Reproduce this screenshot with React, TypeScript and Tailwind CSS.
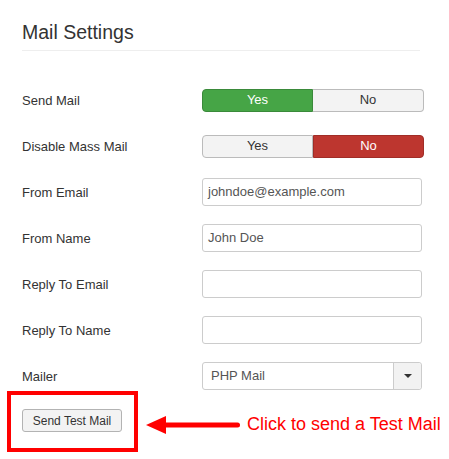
import React from "react";

function Toggle({ active }: { active: "yes" | "no" }) {
  return (
    <div className="flex h-[23px] w-[222px] text-[13px]">
      <div
        className={
          active === "yes"
            ? "flex w-[111px] items-center justify-center rounded-l-[4px] border border-[#3a8a3a] bg-[#46a546] text-white"
            : "flex w-[111px] items-center justify-center rounded-l-[4px] border border-[#bbbbbb] bg-[#f3f3f3] text-[#333]"
        }
      >
        Yes
      </div>
      <div
        className={
          active === "no"
            ? "flex w-[111px] items-center justify-center rounded-r-[4px] border border-[#a02d27] bg-[#bd362f] text-white"
            : "flex w-[111px] items-center justify-center rounded-r-[4px] border border-l-0 border-[#bbbbbb] bg-[#f3f3f3] text-[#333]"
        }
      >
        No
      </div>
    </div>
  );
}

function Input({ value }: { value?: string }) {
  return (
    <div className="flex h-[28px] w-[220px] items-center rounded-[3px] border border-[#cccccc] bg-white px-[5px] text-[13px] text-[#555]">
      {value}
    </div>
  );
}

function Row({ label, children }: { label: string; children: React.ReactNode }) {
  return (
    <div className="flex h-[28px] items-center">
      <div className="w-[180px] pt-px text-[13px] text-[#333]">{label}</div>
      {children}
    </div>
  );
}

export default function App() {
  return (
    <div className="h-[459px] w-[449px] overflow-hidden bg-white font-['Liberation_Sans',Arial,sans-serif] text-[#333]">
      <div className="pl-[22px] pt-[20px]">
        <h2 className="w-[398px] border-b border-[#eeeeee] pb-[6px] text-[19.5px] font-normal leading-[24px] text-[#333]">
          Mail Settings
        </h2>
        <div className="mt-[35px] flex flex-col gap-[18px]">
          <Row label="Send Mail">
            <Toggle active="yes" />
          </Row>
          <Row label="Disable Mass Mail">
            <Toggle active="no" />
          </Row>
          <Row label="From Email">
            <Input value="johndoe@example.com" />
          </Row>
          <Row label="From Name">
            <Input value="John Doe" />
          </Row>
          <Row label="Reply To Email">
            <Input />
          </Row>
          <Row label="Reply To Name">
            <Input />
          </Row>
          <Row label="Mailer">
            <div className="flex h-[28px] w-[220px] rounded-[3px] border border-[#cccccc] bg-white text-[13px] text-[#555]">
              <div className="flex flex-1 items-center pl-[8px]">PHP Mail</div>
              <div className="flex w-[28px] items-center justify-center rounded-r-[3px] border-l border-[#cccccc] bg-[#f2f2f2]">
                <svg width="8" height="4" viewBox="0 0 8 4">
                  <path d="M0 0 L8 0 L4 4 Z" fill="#333" />
                </svg>
              </div>
            </div>
          </Row>
        </div>
      </div>
      <div className="mt-px flex items-start pl-[7px]">
        <div className="h-[61px] w-[131px] border-4 border-[#ff0000] pl-[11px] pt-[14px]">
          <button className="flex h-[23px] w-[100px] items-center justify-center rounded-[3px] border border-[#b3b3b3] bg-[#f3f3f3] text-[12px] text-[#333]">
            Send Test Mail
          </button>
        </div>
        <svg className="ml-[8px] mt-[25px]" width="94" height="18" viewBox="0 0 94 18">
          <path d="M0 9 L20 0 L20 18 Z" fill="#ff0000" />
          <line x1="18" y1="9" x2="91.5" y2="9" stroke="#ff0000" strokeWidth="5" strokeLinecap="round" />
        </svg>
        <div className="ml-[7px] mt-[23px] whitespace-nowrap text-[18px] leading-[20px] text-[#ff0000]">
          Click to send a Test Mail
        </div>
      </div>
    </div>
  );
}
